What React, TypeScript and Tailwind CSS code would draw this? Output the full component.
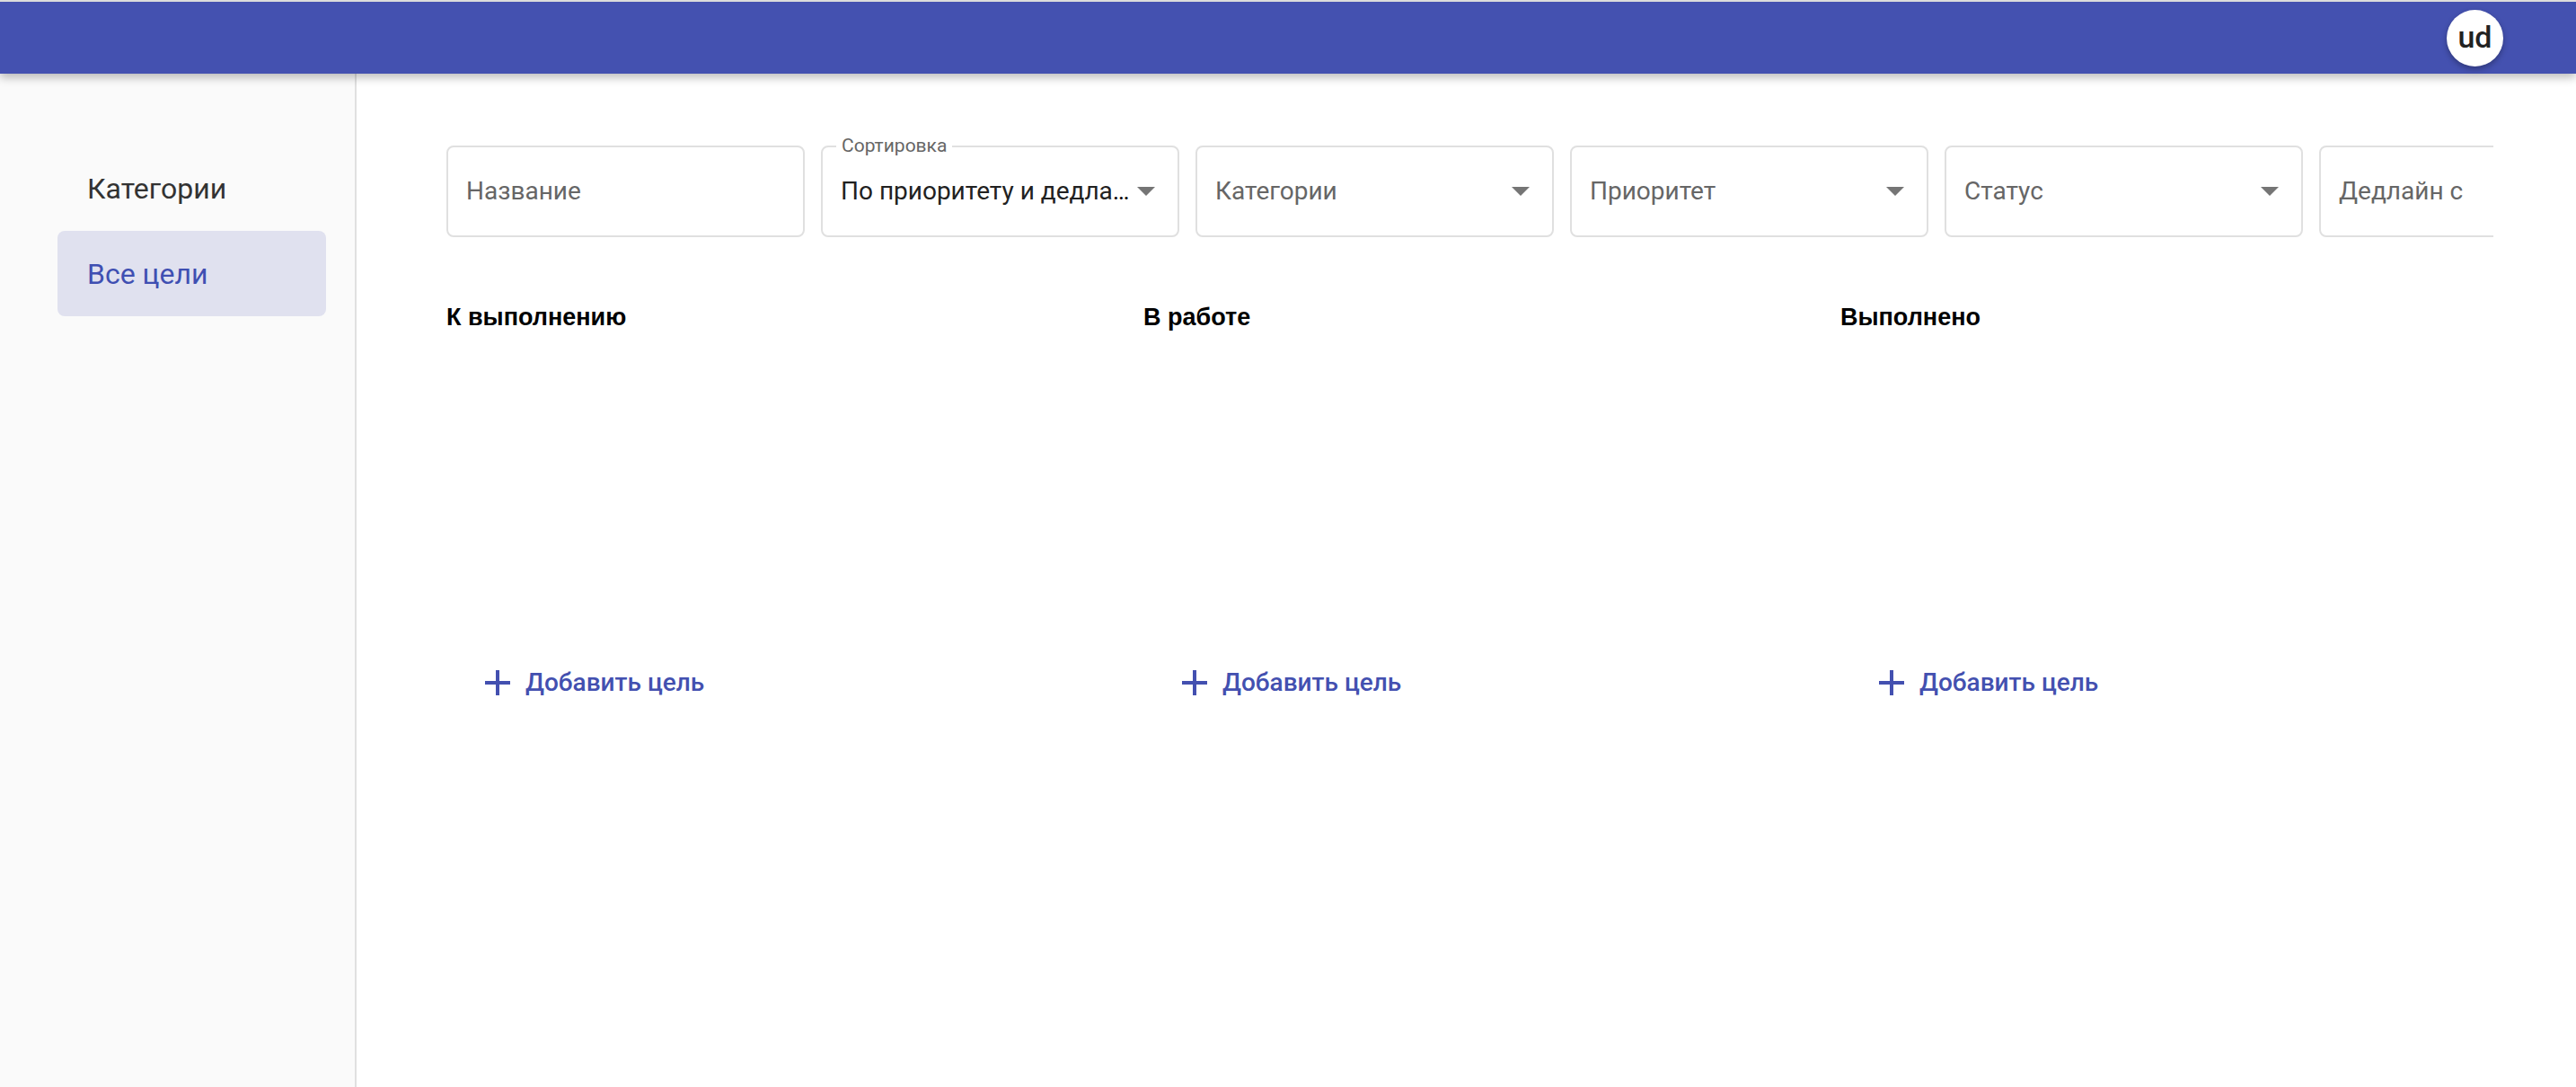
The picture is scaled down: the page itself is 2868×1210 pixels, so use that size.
import { ReactNode } from 'react';

function Caret() {
  return (
    <svg width="20" height="10" viewBox="0 0 20 10" className="shrink-0">
      <path d="M0 0 L20 0 L10 10 Z" fill="#757575" />
    </svg>
  );
}

function PlusIcon() {
  return (
    <svg width="28" height="28" viewBox="0 0 28 28" className="shrink-0">
      <rect x="12" y="0" width="4" height="28" fill="#4350b0" />
      <rect x="0" y="12" width="28" height="4" fill="#4350b0" />
    </svg>
  );
}

interface FieldProps {
  children: ReactNode;
  select?: boolean;
  label?: string;
}

function Field({ children, select, label }: FieldProps) {
  return (
    <div className="relative w-[399px] h-[102px] shrink-0 rounded-[8px] border-2 border-[#e0e0e0] bg-white flex items-center pl-[20px] pr-[25px]">
      {label && (
        <span className="absolute -top-[14px] left-[15px] px-[6px] bg-white text-[21px] leading-[24px] text-[#666]">
          {label}
        </span>
      )}
      <div className="flex-1 min-w-0 truncate text-[28px] leading-[36px]">{children}</div>
      {select && <Caret />}
    </div>
  );
}

const columns = ['К выполнению', 'В работе', 'Выполнено'];

export default function App() {
  return (
    <div className="h-[1210px] flex flex-col bg-white overflow-hidden font-['Roboto',sans-serif]">
      <header className="relative z-10 h-[82px] shrink-0 border-t-2 border-[#dcdcdc] bg-[#4451b0] shadow-[0_4px_10px_rgba(0,0,0,0.28)] flex items-center justify-end pr-[81px]">
        <div className="w-[63px] h-[63px] rounded-full bg-white shadow-[0_3px_6px_rgba(0,0,0,0.3)] flex items-center justify-center text-[34px] font-medium text-[#222] leading-none pb-[2px]">
          ud
        </div>
      </header>

      <div className="flex flex-1 min-h-0">
        <aside className="w-[397px] shrink-0 bg-[#fafafa] border-r-2 border-[#e0e0e0] pt-[80px]">
          <div className="ml-[64px] w-[299px] h-[95px] pl-[33px] flex items-center rounded-[8px] text-[32px] text-[#333]">
            Категории
          </div>
          <div className="ml-[64px] w-[299px] h-[95px] pl-[33px] flex items-center rounded-[8px] bg-[#e0e1ef] text-[32px] text-[#3f4fb2]">
            Все цели
          </div>
        </aside>

        <main className="flex-1 min-w-0 pl-[100px] pr-[92px] pt-[62px]">
          <div className="overflow-hidden pt-[18px]">
            <div className="flex gap-[18px]">
              <Field>
                <span className="text-[#666]">Название</span>
              </Field>
              <Field select label="Сортировка">
                <span className="text-[#212121]">По приоритету и дедлайну</span>
              </Field>
              <Field select>
                <span className="text-[#666]">Категории</span>
              </Field>
              <Field select>
                <span className="text-[#666]">Приоритет</span>
              </Field>
              <Field select>
                <span className="text-[#666]">Статус</span>
              </Field>
              <Field>
                <span className="text-[#666]">Дедлайн с</span>
              </Field>
            </div>

            <div className="flex mt-[69px]">
              {columns.map((title) => (
                <div key={title} className="w-[776px] shrink-0">
                  <div className="h-[40px] flex items-center font-['Liberation_Sans',sans-serif] font-bold text-[27px] text-black">
                    {title}
                  </div>
                  <div className="mt-[359px] pl-[43px]">
                    <button className="h-[56px] flex items-center gap-[17px] text-[28px] font-medium text-[#4350b0]">
                      <PlusIcon />
                      Добавить цель
                    </button>
                  </div>
                </div>
              ))}
            </div>
          </div>
        </main>
      </div>
    </div>
  );
}
